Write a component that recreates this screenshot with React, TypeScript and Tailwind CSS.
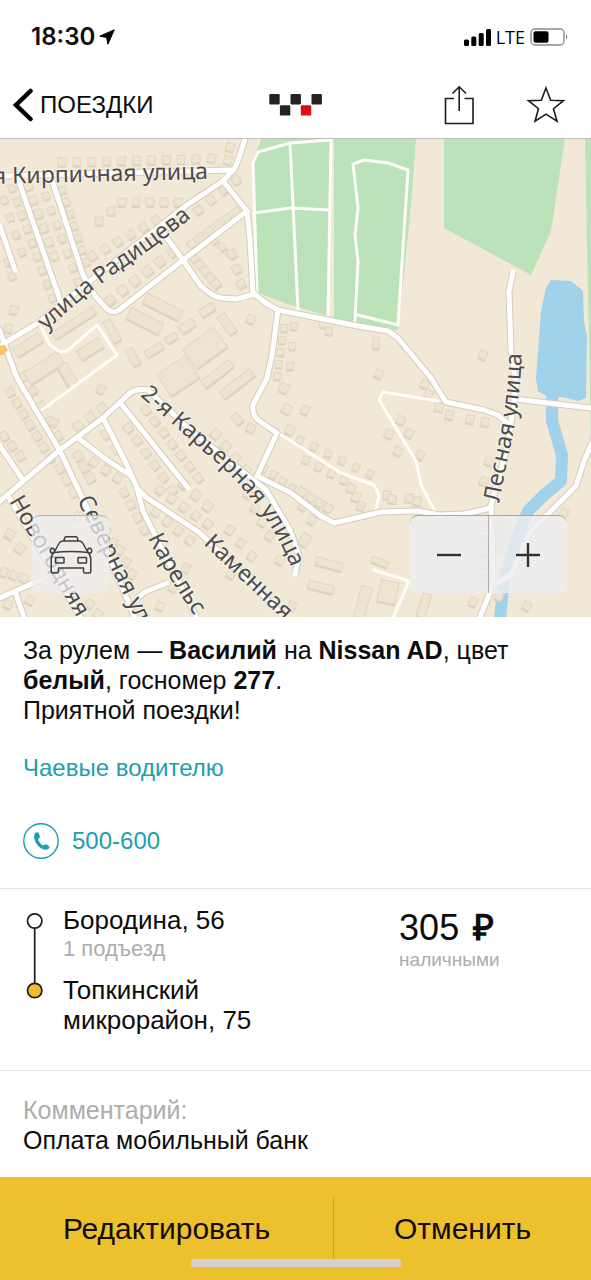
import React from "react";

type Point = [number, number];

type HouseRow = {
  from: Point;
  to: Point;
  count: number;
  size?: number;
  angle?: number;
};

const houseRows: HouseRow[] = [
  { from: [62, 162], to: [196, 159], count: 10, size: 8, angle: 2 },
  { from: [212, 158], to: [228, 160], count: 2, size: 8, angle: 15 },
  { from: [230, 147], to: [230, 147], count: 1, size: 8, angle: 15 },
  { from: [122, 202], to: [178, 202], count: 5, size: 8 },
  { from: [4, 200], to: [22, 252], count: 4, size: 7, angle: -20 },
  { from: [8, 262], to: [12, 276], count: 2, size: 7, angle: -20 },
  { from: [12, 188], to: [52, 298], count: 9, size: 7, angle: -20 },
  { from: [28, 186], to: [54, 256], count: 6, size: 8, angle: -20 },
  { from: [46, 196], to: [78, 282], count: 7, size: 7, angle: -20 },
  { from: [62, 190], to: [86, 262], count: 7, size: 7, angle: -20 },
  { from: [92, 256], to: [156, 220], count: 6, size: 8, angle: -35 },
  { from: [110, 300], to: [172, 252], count: 6, size: 9, angle: -38 },
  { from: [192, 244], to: [236, 212], count: 6, size: 8, angle: -35 },
  { from: [198, 210], to: [236, 180], count: 4, size: 8, angle: -35 },
  { from: [194, 258], to: [216, 284], count: 5, size: 8, angle: -35 },
  { from: [214, 240], to: [230, 254], count: 3, size: 7, angle: -35 },
  { from: [99, 221], to: [111, 211], count: 2, size: 8 },
  { from: [232, 254], to: [241, 284], count: 3, size: 8, angle: -30 },
  { from: [10, 392], to: [50, 458], count: 7, size: 8, angle: -30 },
  { from: [24, 376], to: [58, 436], count: 5, size: 8, angle: -30 },
  { from: [4, 436], to: [20, 456], count: 3, size: 8, angle: -30 },
  { from: [78, 426], to: [102, 408], count: 3, size: 9, angle: -38 },
  { from: [60, 468], to: [74, 492], count: 3, size: 9, angle: -28 },
  { from: [78, 456], to: [90, 478], count: 3, size: 9, angle: -28 },
  { from: [94, 462], to: [118, 478], count: 3, size: 8, angle: 35 },
  { from: [106, 434], to: [116, 448], count: 2, size: 9, angle: -30 },
  { from: [128, 428], to: [172, 490], count: 6, size: 8, angle: -38 },
  { from: [146, 410], to: [198, 478], count: 7, size: 8, angle: -38 },
  { from: [124, 492], to: [144, 530], count: 4, size: 8, angle: -28 },
  { from: [160, 490], to: [208, 524], count: 5, size: 8, angle: 35 },
  { from: [156, 512], to: [190, 540], count: 4, size: 8, angle: 35 },
  { from: [184, 484], to: [208, 506], count: 3, size: 9, angle: 35 },
  { from: [216, 434], to: [246, 470], count: 4, size: 9, angle: 40 },
  { from: [248, 494], to: [270, 536], count: 4, size: 8, angle: 35 },
  { from: [230, 530], to: [252, 556], count: 3, size: 8, angle: 35 },
  { from: [264, 468], to: [292, 488], count: 4, size: 7, angle: 25 },
  { from: [284, 328], to: [277, 376], count: 5, size: 7, angle: 5 },
  { from: [294, 326], to: [290, 366], count: 3, size: 7, angle: 5 },
  { from: [284, 388], to: [290, 430], count: 3, size: 9, angle: 25 },
  { from: [300, 440], to: [370, 474], count: 6, size: 7, angle: 20 },
  { from: [306, 460], to: [344, 480], count: 4, size: 7, angle: 20 },
  { from: [351, 488], to: [361, 506], count: 3, size: 8, angle: 20 },
  { from: [302, 492], to: [328, 508], count: 4, size: 8, angle: 30 },
  { from: [303, 506], to: [312, 520], count: 2, size: 8, angle: 30 },
  { from: [387, 495], to: [392, 499], count: 2, size: 8, angle: 10 },
  { from: [409, 498], to: [417, 501], count: 2, size: 8, angle: 10 },
  { from: [323, 324], to: [329, 331], count: 2, size: 7, angle: 5 },
  { from: [425, 384], to: [429, 394], count: 2, size: 8, angle: 30 },
  { from: [439, 407], to: [449, 415], count: 2, size: 8, angle: 10 },
  { from: [470, 419], to: [485, 422], count: 2, size: 8, angle: 10 },
  { from: [401, 420], to: [409, 433], count: 2, size: 8, angle: 25 },
  { from: [389, 434], to: [398, 451], count: 2, size: 8, angle: 25 },
  { from: [482, 526], to: [484, 578], count: 5, size: 7 },
  { from: [500, 522], to: [499, 548], count: 4, size: 7 },
  { from: [10, 534], to: [20, 548], count: 2, size: 9, angle: 30 },
  { from: [4, 572], to: [24, 578], count: 3, size: 8, angle: 25 },
  { from: [8, 604], to: [30, 600], count: 2, size: 8, angle: 25 },
  { from: [100, 520], to: [114, 542], count: 3, size: 7, angle: 30 },
  { from: [120, 550], to: [132, 574], count: 3, size: 8, angle: 30 },
  { from: [160, 606], to: [186, 568], count: 3, size: 8, angle: 20 },
  { from: [90, 604], to: [98, 614], count: 2, size: 8, angle: 30 },
  { from: [8, 328], to: [14, 310], count: 2, size: 8, angle: 15 },
];

const singleHouses: Point[] = [
  [251, 319], [483, 355], [305, 410], [101, 389], [251, 428], [420, 455],
  [489, 461], [484, 481], [379, 374], [527, 606], [499, 596], [564, 513],
  [280, 560], [292, 606], [78, 516], [473, 602], [231, 574], [54, 422],
];

type Block = [x: number, y: number, w: number, h: number, angle: number];

const blocks: Block[] = [
  [163, 307, 40, 11, 27], [145, 321, 36, 12, 27], [74, 323, 48, 8, -33],
  [112, 331, 8, 24, -28], [28, 345, 30, 10, -32], [90, 349, 26, 11, -32],
  [44, 368, 40, 14, -32], [68, 375, 24, 10, 60], [133, 357, 8, 18, -30],
  [154, 350, 19, 7, -30], [171, 338, 12, 7, -33], [187, 326, 16, 9, -33],
  [207, 310, 16, 8, -33], [205, 348, 38, 24, -36], [227, 324, 9, 22, -35],
  [178, 376, 34, 26, -33], [217, 374, 36, 9, -38], [237, 384, 38, 9, -38],
  [376, 343, 7, 11, 3], [237, 419, 8, 11, -40],
  [329, 564, 27, 8, 15], [321, 587, 26, 8, 14], [380, 562, 18, 6, 20],
  [363, 602, 11, 32, 15], [388, 592, 18, 22, 12], [424, 605, 9, 24, 18],
  [305, 540, 10, 12, 35],
];

const green: string[] = [
  "M262 138H331L328 316L290 305L258 293L253 160Z",
  "M334 138H416L411 205L398 330L380 330L334 319Z",
  "M444 138H565L551 231L531 275L444 228Z",
  "M585 138H760V500H592Z",
];

const minorRoads: string[] = [
  "M257 292L253 163L258 152L290 143L331 140L328 316",
  "M290 143L298 310M254 213L291 208L330 210",
  "M355 321L358 261L355 235L358 208L353 164L364 160L388 163L408 170L398 325L358 315",
  "M40 325L50 345L60 352L67 351L97 325L117 355L42 410",
  "M277 433L291 441L341 473L374 485L379 495L376 511",
  "M436 513L421 485L416 461L379 400L383 392L438 401",
  "M374 570L409 581L393 618",
];

const roads: string[] = [
  "M-120 178L0 176L232 170",
  "M245 138L241 152L235 168L223 181L187 205L90 281L38 323L8 341L-60 382",
  "M223 181L247 211L250 240L253 293",
  "M247 211L183 260L119 310Q113 314 107 309L95 296L83 275L52 180",
  "M162 231L183 260L200 285Q212 297 222 298L237 299L255 294",
  "M17 176L60 300M0 226L15 270",
  "M253 293L267 304L278 310L328 320L358 326L388 331L398 338L431 378L446 402L484 410L498 415L510 425",
  "M278 310L272 355L267 378L253 405Q252 415 258 420L277 433L257 476L291 493L321 516L334 523L381 512L418 511L440 515L464 514L491 508",
  "M513 272L509 291L511 351L516 385L508 445L491 505L493 585L478 622",
  "M514 399L591 408L760 420",
  "M760 360L610 400L591 445L584 461L576 486L531 531L511 575L493 585",
  "M-10 315L0 331L7 351L17 378L60 451L80 493L100 535L135 618",
  "M-40 533L0 501L60 450L103 418L130 393Q137 388 148 390L190 430L266 490L290 530L299 556L295 574",
  "M103 418L127 465L137 488L143 511L153 531L197 618",
  "M78 438L107 460L130 475M137 488L147 498L200 533L280 612M122 405L188 488",
  "M0 446L23 480M8 496L85 625",
  "M-20 605L0 598L40 580M15 591L25 620M137 598L145 592L167 583",
];

const labels = [
  { id: "kirpichnaya", d: "M-7 184L250 178", text: "я Кирпичная улица" },
  { id: "radishcheva", d: "M46 331Q90 290 125 267T240 179", text: "улица Радищева" },
  { id: "karyernaya", d: "M140 396Q168 420 205 453Q268 503 294 575", text: "2-я Карьерная улица" },
  { id: "severnaya", d: "M77 500L142 632", text: "Северная ул" },
  { id: "novogodnyaya", d: "M9 501L90 640", text: "Новогодняя" },
  { id: "karelskaya", d: "M148 538Q168 580 215 645", text: "Карельс" },
  { id: "kamennaya", d: "M203 544L310 645", text: "Каменная" },
  { id: "lesnaya", d: "M499 503L507 462Q522 400 522 340", text: "Лесная улица" },
];

function House({ x, y, w, h, angle }: { x: number; y: number; w: number; h: number; angle: number }) {
  return (
    <g transform={`translate(${x} ${y}) rotate(${angle})`}>
      <rect x={-w / 2} y={-h / 2 + 2} width={w} height={h} fill="#dbd2c0" />
      <rect x={-w / 2} y={-h / 2} width={w} height={h} fill="#eee4cf" stroke="#e1d7c4" />
    </g>
  );
}

function CityMap() {
  return (
    <svg
      className="absolute inset-0 h-full w-full"
      viewBox="0 139 591 478"
      preserveAspectRatio="xMidYMid slice"
      role="img"
      aria-label="Карта"
    >
      <rect x="-400" y="-200" width="1600" height="1400" fill="#f1e8d5" />
      <g fill="#bce2ba">
        {green.map((d) => (
          <path key={d} d={d} />
        ))}
      </g>
      <path
        d="M551 280L571 281L583 291L584 321L587 338L586 398L578 401L562 397L552 399L538 391L536 378L541 311L546 288Z"
        fill="#a0d2eb"
      />
      <path
        d="M552 390L552 421L562 455L561 481L544 495L528 511L518 535L504 578L500 620"
        fill="none"
        stroke="#a0d2eb"
        strokeWidth="12"
        strokeLinejoin="round"
      />
      {houseRows.map((row, i) =>
        Array.from({ length: row.count }, (_, n) => {
          const t = row.count === 1 ? 0 : n / (row.count - 1);
          const size = row.size ?? 8;
          return (
            <House
              key={`${i}-${n}`}
              x={row.from[0] + (row.to[0] - row.from[0]) * t}
              y={row.from[1] + (row.to[1] - row.from[1]) * t}
              w={size}
              h={size}
              angle={row.angle ?? 0}
            />
          );
        }),
      )}
      {singleHouses.map(([x, y]) => (
        <House key={`${x}-${y}`} x={x} y={y} w={8} h={8} angle={25} />
      ))}
      {blocks.map(([x, y, w, h, angle]) => (
        <House key={`b${x}-${y}`} x={x} y={y} w={w} h={h} angle={angle} />
      ))}
      <g fill="none" stroke="#fffdf8" strokeWidth="3" strokeLinejoin="round" strokeLinecap="round">
        {minorRoads.map((d) => (
          <path key={d} d={d} />
        ))}
      </g>
      <g fill="none" stroke="#d3ccc1" strokeWidth="7" strokeLinejoin="round">
        {roads.map((d) => (
          <path key={d} d={d} />
        ))}
      </g>
      <g fill="none" stroke="#ffffff" strokeWidth="5" strokeLinejoin="round" strokeLinecap="round">
        {roads.map((d) => (
          <path key={d} d={d} />
        ))}
      </g>
      <path d="M-8 346L5 345L8 350L3 355L-8 355Z" fill="#f6c66c" />
      <g
        fill="#4b4b50"
        stroke="#f8f3e8"
        strokeWidth="2"
        strokeLinejoin="round"
        paintOrder="stroke"
        className="font-['Noto_Sans','Open_Sans',sans-serif] text-[23px]"
      >
        {labels.map((label) => (
          <React.Fragment key={label.id}>
            <path id={label.id} d={label.d} fill="none" stroke="none" />
            <text>
              <textPath href={`#${label.id}`}>{label.text}</textPath>
            </text>
          </React.Fragment>
        ))}
      </g>
    </svg>
  );
}

function StatusBar() {
  return (
    <div className="flex h-[74px] items-center justify-between pr-[22px] pl-[31px]">
      <div className="flex items-center gap-1">
        <span className="font-['Inter',sans-serif] text-[24px] leading-none font-semibold">18:30</span>
        <svg className="h-4 w-4" viewBox="0 0 16 16" aria-hidden="true">
          <path d="M15.3.8L.8 7.2L7.6 8.5L8.9 15.2Z" fill="#000" stroke="#000" strokeLinejoin="round" />
        </svg>
      </div>
      <div className="flex items-center gap-[5px]">
        <svg className="h-[17px] w-[27px]" viewBox="0 0 27 17" aria-hidden="true">
          <rect x="0" y="10.5" width="5" height="6.5" rx="1.5" />
          <rect x="7.3" y="7.5" width="5" height="9.5" rx="1.5" />
          <rect x="14.7" y="4" width="5" height="13" rx="1.5" />
          <rect x="22" y="0" width="5" height="17" rx="1.5" />
        </svg>
        <span className="font-['Open_Sans','Noto_Sans',sans-serif] text-[18px] leading-none text-black">LTE</span>
        <svg className="h-[18px] w-[39px]" viewBox="0 0 39 18" aria-hidden="true">
          <rect x="1" y="1" width="33" height="16" rx="4" fill="none" stroke="#8c8c8c" strokeWidth="1.4" />
          <rect x="3.5" y="3.3" width="15" height="11.4" rx="2" />
          <path d="M36 6.5q2.4 2.5 0 5z" fill="#777" />
        </svg>
      </div>
    </div>
  );
}

function NavBar() {
  return (
    <header className="grid h-[65px] grid-cols-3 items-center border-b border-[#bdbdbd] pr-6 pb-[2px] pl-3">
      <button type="button" className="flex items-center gap-[7px] justify-self-start text-[24px] leading-8">
        <svg className="h-[34px] w-[21px]" viewBox="0 0 21 34" aria-hidden="true">
          <path d="M18.500 3L4 17L18.500 31" fill="none" stroke="#000" strokeWidth="4.500" strokeLinecap="round" />
        </svg>
        ПОЕЗДКИ
      </button>
      <svg className="ml-3 h-[22px] w-[54px] justify-self-center" viewBox="0 0 54 22" role="img" aria-label="Такси">
        <g fill="#232323">
          <rect x="0.3" y="0" width="10.4" height="10.4" rx="1.2" />
          <rect x="10.9" y="11.2" width="10.4" height="10.4" rx="1.2" />
          <rect x="21.5" y="0" width="10.4" height="10.4" rx="1.2" />
          <rect x="42.5" y="0" width="10.4" height="10.4" rx="1.2" />
        </g>
        <rect x="31.8" y="11.2" width="10.4" height="10.4" rx="1.2" fill="#de0d10" />
      </svg>
      <div className="flex items-center gap-[49px] justify-self-end">
        <button type="button" aria-label="Поделиться">
          <svg className="h-10 w-[34px]" viewBox="0 0 34 40" fill="none" stroke="#1c1c1c" strokeWidth="1.600" aria-hidden="true">
            <path d="M12 13.500H3.500V38.500H31V13.500H22.500M17.200 26V2M10.500 8.500L17.200 1.800L24 8.500" />
          </svg>
        </button>
        <button type="button" aria-label="В избранное">
          <svg className="h-10 w-[42px]" viewBox="0 0 42 40" fill="none" stroke="#1c1c1c" strokeWidth="1.600" aria-hidden="true">
            <path d="M21 3L25.700 15.200L38.500 15.700L28.500 23.700L32 36.200L21 29.200L10 36.200L13.500 23.700L3.500 15.700L16.300 15.200Z" />
          </svg>
        </button>
      </div>
    </header>
  );
}

function CarIcon() {
  return (
    <svg className="h-10 w-11" viewBox="0 0 44 40" fill="none" stroke="#3f3f3f" strokeWidth="1.500" strokeLinejoin="round" strokeLinecap="round" aria-hidden="true">
      <path d="M15 5.800L15.600 3Q15.900 1.700 17 1.700H27Q28.100 1.700 28.400 3L29 5.800" />
      <path d="M5 17.500L10 8.500Q11.200 6 13.500 6H30.500Q32.800 6 34 8.500L39 17.500" />
      <path d="M5 17.500Q2.500 19.500 2.200 24V36.500Q2.200 38 3.700 38H8Q9.500 38 9.500 36.500V33H34.500V36.500Q34.500 38 36 38H40.300Q41.800 38 41.800 36.500V24Q41.500 19.500 39 17.500Q22 15.300 5 17.500Z" />
      <path d="M4.300 18Q1 18.500 1.300 15.500Q2 12.500 4.500 13.500Q5.600 14.200 5.500 16.500M39.700 18Q43 18.500 42.700 15.500Q42 12.500 39.500 13.500Q38.400 14.200 38.500 16.500" />
      <rect x="6.500" y="22.500" width="8.500" height="5.500" rx="0.600" />
      <rect x="29" y="22.500" width="8.500" height="5.500" rx="0.600" />
    </svg>
  );
}

function MapView() {
  return (
    <section className="relative min-h-[320px] flex-1 overflow-hidden">
      <CityMap />
      <div className="absolute inset-x-0 bottom-6 flex justify-between pr-6 pl-8">
        <button
          type="button"
          aria-label="Показать машину"
          className="flex h-[78px] w-[77px] items-center justify-center rounded-lg border-t border-[#b9b5ae] bg-[#ededf0]/75"
        >
          <CarIcon />
        </button>
        <div className="flex h-[78px] rounded-lg border-t border-[#a9a6a0] bg-[#ededf0]/80">
          <button type="button" aria-label="Отдалить" className="flex w-[79px] items-center justify-center border-r border-[#b0aeab]">
            <svg className="h-[26px] w-[26px]" viewBox="0 0 26 26" aria-hidden="true">
              <path d="M1 13H25" stroke="#333" strokeWidth="2.400" />
            </svg>
          </button>
          <button type="button" aria-label="Приблизить" className="flex w-[78px] items-center justify-center">
            <svg className="h-[26px] w-[26px]" viewBox="0 0 26 26" aria-hidden="true">
              <path d="M1 13H25M13 1V25" stroke="#333" strokeWidth="2.400" />
            </svg>
          </button>
        </div>
      </div>
    </section>
  );
}

export default function App() {
  return (
    <div className="flex min-h-screen flex-col bg-white font-['Liberation_Sans',Arial,sans-serif] text-[25px] leading-[30px] text-[#0c0c0c]">
      <StatusBar />
      <NavBar />
      <MapView />

      <section className="px-[23px] pt-[18px] pb-[29px]">
        <p>
          За рулем — <b>Василий</b> на <b>Nissan AD</b>, цвет <b>белый</b>, госномер <b>277</b>.
          <br />
          Приятной поездки!
        </p>
        <a href="#tips" className="mt-7 block text-[24px] text-[#1d9fad]">
          Чаевые водителю
        </a>
        <a href="tel:500600" className="mt-10 flex items-center gap-[13px] text-[24px] text-[#1d9fad]">
          <svg className="h-9 w-9" viewBox="0 0 36 36" aria-hidden="true">
            <circle cx="18" cy="18" r="17.200" fill="none" stroke="#1d9fad" strokeWidth="1.400" />
            <path
              d="M13.300 9.300Q14.800 8.700 15.800 10.600L16.900 13Q17.300 14.200 15.700 15.500Q14.800 16.300 15.500 17.700Q17.300 21 19.800 22.200Q20.800 22.600 21.600 21.800Q22.500 20.900 23.600 21.500L26 23.200Q27.200 24.300 25.900 25.500Q23.500 27.500 20 26.300Q13.500 23.500 11.300 16Q10.200 11.500 13.300 9.300Z"
              fill="#1d9fad"
            />
          </svg>
          500-600
        </a>
      </section>

      <section className="grid grid-cols-[49fr_25fr] border-t border-[#e6e6e6] pt-4 pb-[35px] pl-[23px]">
        <div className="flex">
          <svg className="mt-[7px] mr-4 h-[88px] w-6 shrink-0" viewBox="0 0 24 88" stroke="#1a1a1a" strokeWidth="1.700" aria-hidden="true">
            <path d="M11.700 17V71" />
            <circle cx="11.700" cy="9" r="7.200" fill="#fff" />
            <circle cx="11.700" cy="78.500" r="7.200" fill="#edbd2e" />
          </svg>
          <div>
            <p className="text-[26px]">Бородина, 56</p>
            <p className="text-[22px] leading-7 text-[#adadad]">1 подъезд</p>
            <p className="mt-3 max-w-[240px] text-[26px]">Топкинский микрорайон, 75</p>
          </div>
        </div>
        <div className="pt-[3px]">
          <p className="flex gap-[14px] text-[36px] leading-10">
            <span>305</span> <b>₽</b>
          </p>
          <p className="text-[19px] leading-6 text-[#adadad]">наличными</p>
        </div>
      </section>

      <section className="border-t border-[#e6e6e6] px-[23px] pt-6 pb-[22px]">
        <p className="text-[#adadad]">Комментарий:</p>
        <p>Оплата мобильный банк</p>
      </section>

      <footer className="relative flex h-[103px] items-start bg-[#edc02e] pt-5 text-[30px] text-[#120c02]">
        <button type="button" className="h-[64px] basis-[333px] grow-[333]">
          Редактировать
        </button>
        <button type="button" className="h-[64px] basis-[258px] grow-[258] border-l border-[#cfa429]">
          Отменить
        </button>
        <div className="absolute bottom-[13px] left-1/2 h-2 w-[211px] -translate-x-1/2 rounded-full bg-[#d2d1cf]" />
      </footer>
    </div>
  );
}
